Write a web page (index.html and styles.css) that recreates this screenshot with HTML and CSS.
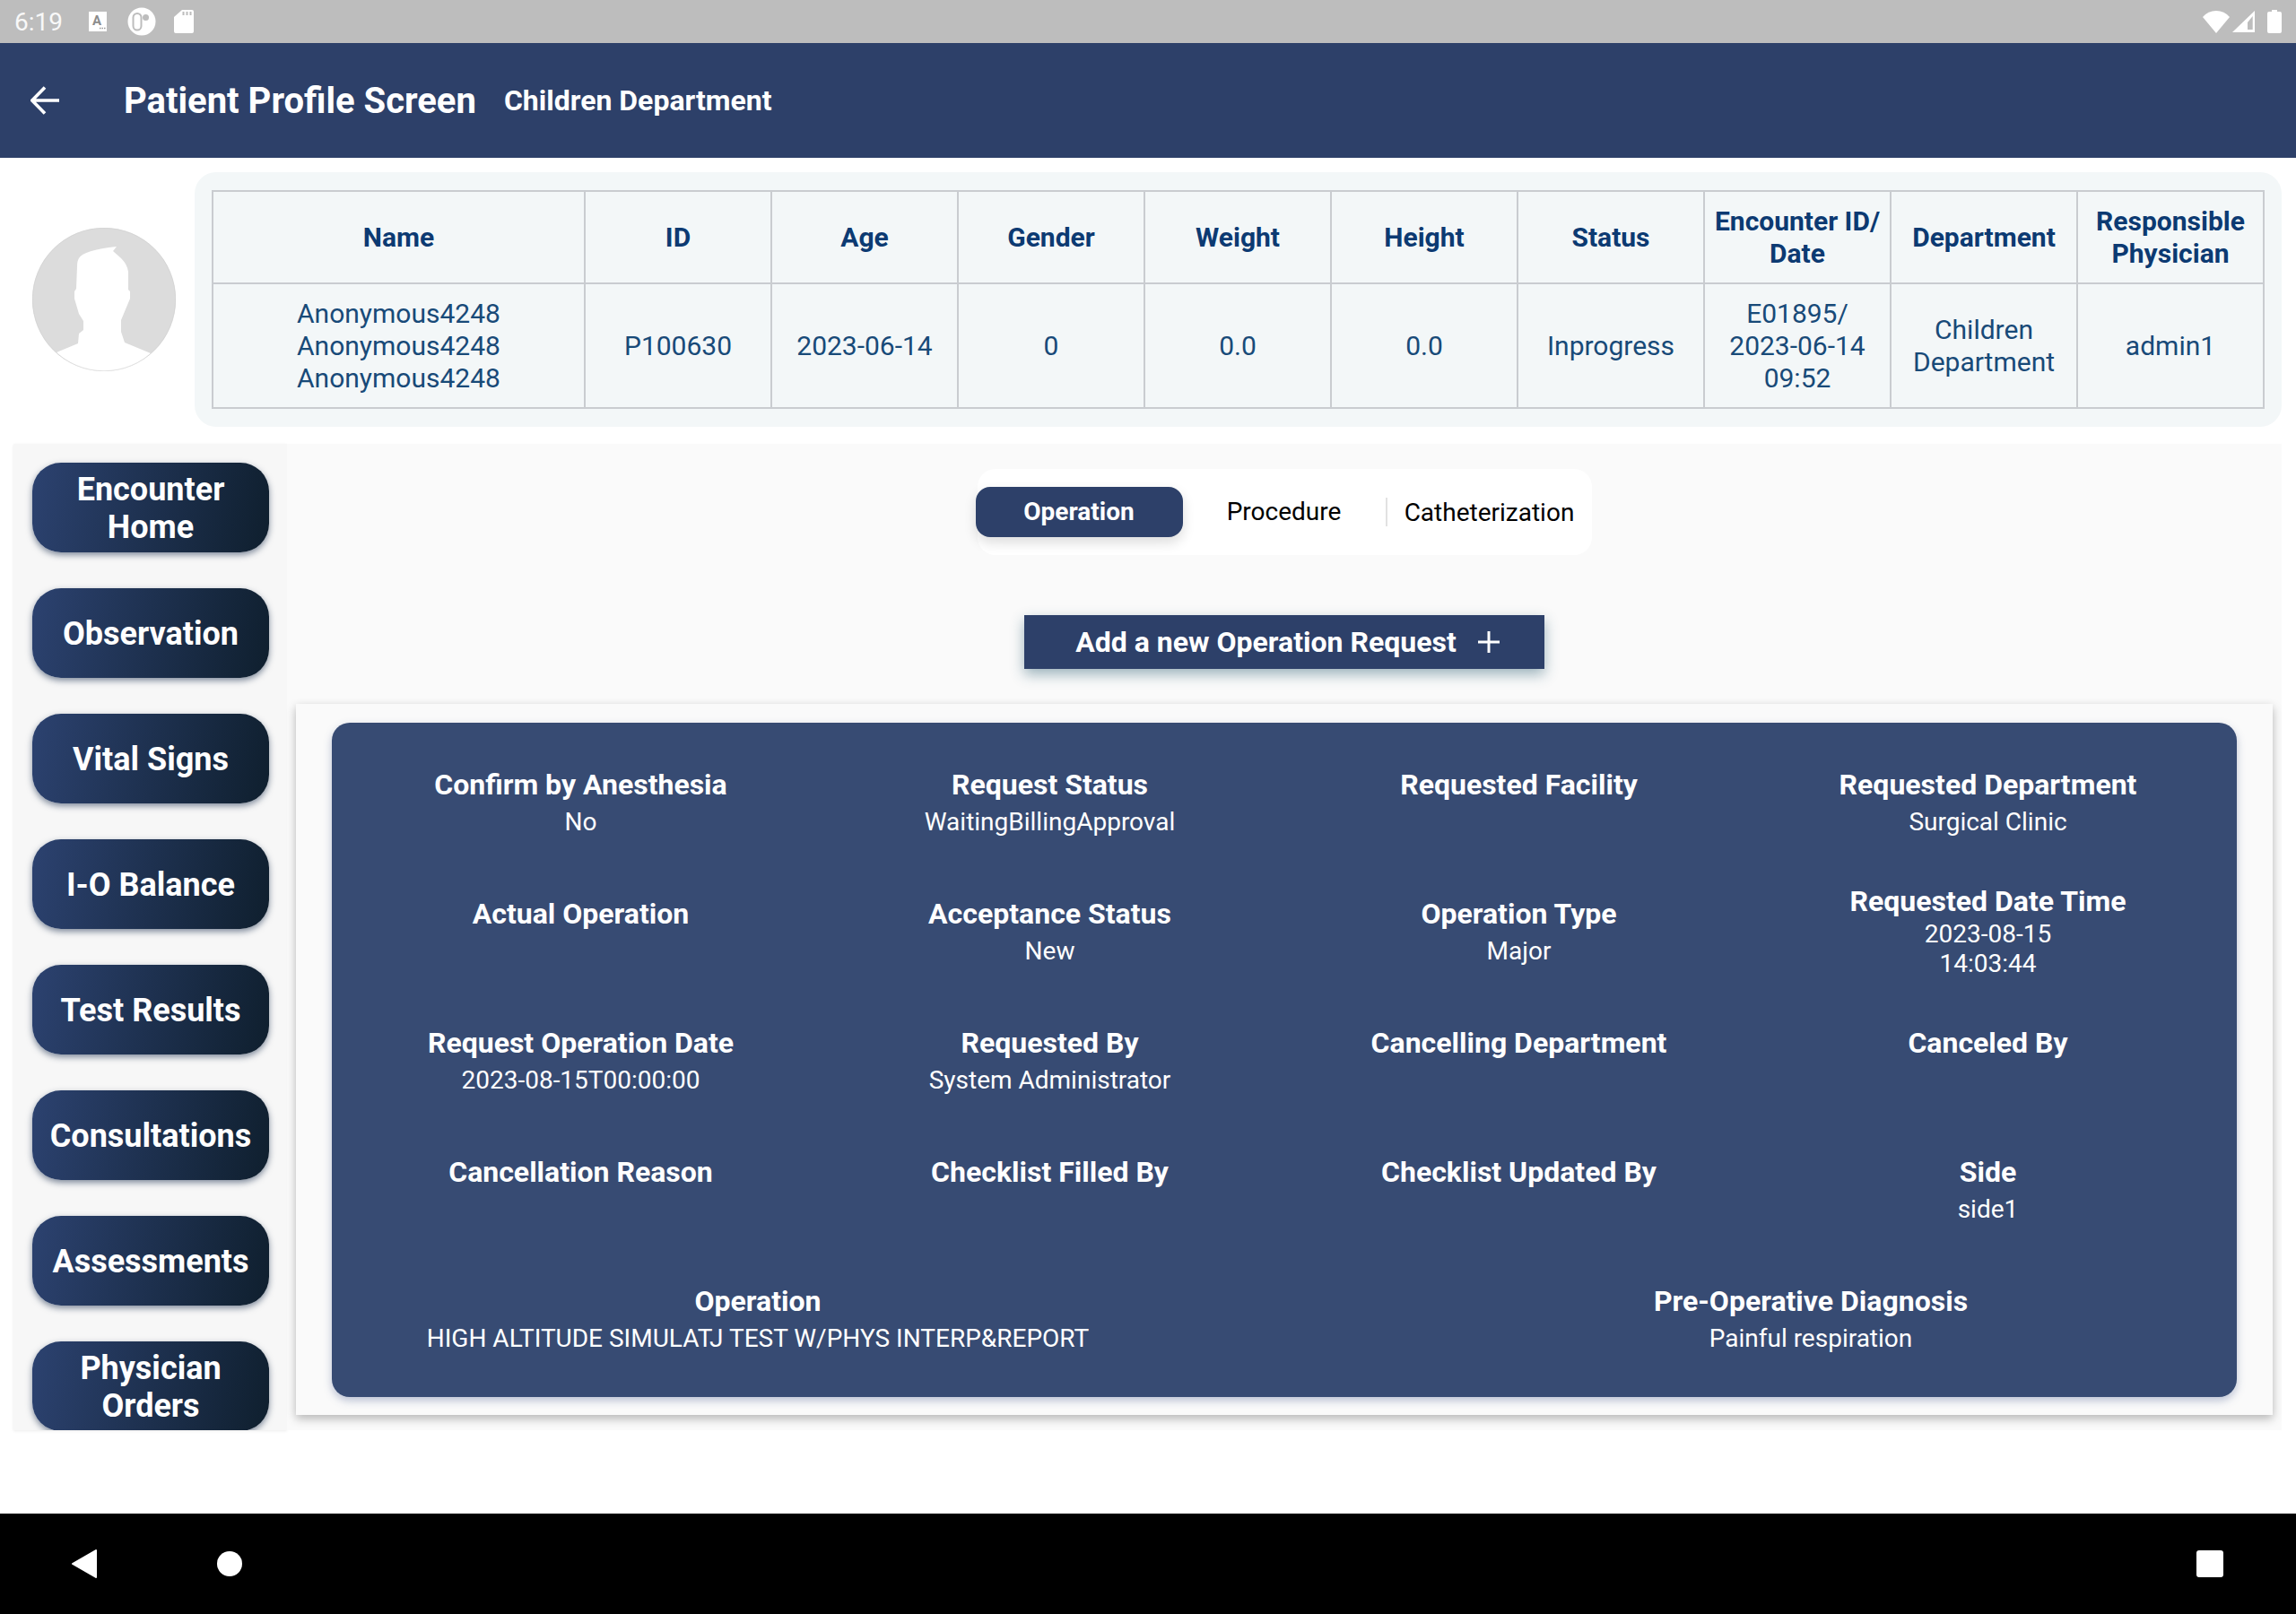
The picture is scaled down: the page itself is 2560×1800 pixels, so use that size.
FILE: index.html
```html
<!DOCTYPE html>
<html lang="en">
<head>
    <meta charset="UTF-8">
    <title>Patient Profile Screen</title>
    <link rel="stylesheet" href="styles.css">
</head>
<body>
    <div class="status-bar">
        <span class="clock">6:19</span>
        <svg class="note-icon" width="20" height="22" viewBox="0 0 20 22"><rect width="20" height="22" fill="#fff"/><text x="9" y="15" class="note-letter">A</text><path d="M12 18.500h7" stroke="#9a9a9a" stroke-width="1.500" stroke-dasharray="1.500 1"/></svg>
        <svg class="circle-icon" width="32" height="32" viewBox="0 0 32 32"><circle cx="16" cy="16" r="15.5" fill="#fff"/><rect x="6.500" y="7" width="9" height="18.500" rx="4.500" fill="#fff" stroke="#bdbdbd" stroke-width="2"/><circle cx="20.500" cy="11.500" r="3.500" fill="#bdbdbd"/></svg>
        <svg class="sd-icon" width="22" height="26" viewBox="0 0 22 26"><path d="M9 0h11a2 2 0 0 1 2 2v22a2 2 0 0 1-2 2H2a2 2 0 0 1-2-2V8z" fill="#fff"/><path d="M10.500 2v4M14.500 2v4M18.500 2v4" stroke="#bdbdbd" stroke-width="2"/></svg>
        <span class="status-right">
            <svg width="30" height="25" viewBox="0 0 30 25"><path d="M15 25 0 7Q6 0 15 0t15 7z" fill="#fff"/></svg>
            <svg width="25" height="24" viewBox="0 0 25 24"><path d="M25 0v24H0z" fill="#fff"/><path d="M22.700 6 17 13v8h5.700z" fill="#bdbdbd"/></svg>
            <svg class="battery" width="16" height="26" viewBox="0 0 16 26"><path d="M5 0h6v2h3a2 2 0 0 1 2 2v20a2 2 0 0 1-2 2H2a2 2 0 0 1-2-2V4a2 2 0 0 1 2-2h3z" fill="#fff"/></svg>
        </span>
    </div>

    <header class="app-bar">
        <svg class="back" width="32" height="32" viewBox="0 0 32 32"><path d="M32 16H3M16 1.500 1.800 16 16 30.500" fill="none" stroke="#fff" stroke-width="3.600"/></svg>
        <h1>Patient Profile Screen</h1>
        <h2>Children Department</h2>
    </header>

    <section class="patient-row">
        <svg class="avatar" width="160" height="160" viewBox="0 0 160 160">
            <circle cx="80" cy="80" r="80" fill="#dcdcdc"/>
            <path d="M94 21 90 26 99 34Q106 41 107 49V69L109 71V79L99 103V116L103 128 132 140Q110 160 80 160 50 160 27 139L51 129 52 118 57 114V104L52 96 47 79V71L49 68 50 43Q50 37 52 34 57 25 94 21Z" fill="#fff"/>
            <circle cx="80" cy="80" r="79.700" fill="none" stroke="#cfcfcf" stroke-width=".6"/>
        </svg>
        <div class="patient-panel">
            <table class="patient-table">
                <colgroup>
                    <col class="col-name"><col><col><col><col><col><col><col><col><col>
                </colgroup>
                <thead>
                    <tr>
                        <th>Name</th><th>ID</th><th>Age</th><th>Gender</th><th>Weight</th><th>Height</th><th>Status</th>
                        <th>Encounter ID/<br>Date</th><th>Department</th><th>Responsible Physician</th>
                    </tr>
                </thead>
                <tbody>
                    <tr>
                        <td>Anonymous4248<br>Anonymous4248<br>Anonymous4248</td>
                        <td>P100630</td><td>2023-06-14</td><td>0</td><td>0.0</td><td>0.0</td><td>Inprogress</td>
                        <td>E01895/<br>2023-06-14<br>09:52</td><td>Children Department</td><td>admin1</td>
                    </tr>
                </tbody>
            </table>
        </div>
    </section>

    <div class="content-row">
        <nav class="side-menu">
            <a class="side-btn">Encounter<br>Home</a>
            <a class="side-btn">Observation</a>
            <a class="side-btn">Vital Signs</a>
            <a class="side-btn">I-O Balance</a>
            <a class="side-btn">Test Results</a>
            <a class="side-btn">Consultations</a>
            <a class="side-btn">Assessments</a>
            <a class="side-btn">Physician<br>Orders</a>
        </nav>
        <main class="main-area">
            <div class="tabs">
                <span class="tab tab-active">Operation</span>
                <span class="tab tab-procedure">Procedure</span>
                <span class="tab tab-cath">Catheterization</span>
            </div>
            <button class="add-btn">Add a new Operation Request
                <svg width="24" height="24" viewBox="0 0 24 24"><path d="M12 0v24M0 12h24" stroke="#fff" stroke-width="3"/></svg>
            </button>
            <div class="request-card">
                <div class="request-panel">
                    <div class="info-grid">
                        <div class="info"><b>Confirm by Anesthesia</b><span>No</span></div>
                        <div class="info"><b>Request Status</b><span>WaitingBillingApproval</span></div>
                        <div class="info"><b>Requested Facility</b><span></span></div>
                        <div class="info"><b>Requested Department</b><span>Surgical Clinic</span></div>

                        <div class="info"><b>Actual Operation</b><span></span></div>
                        <div class="info"><b>Acceptance Status</b><span>New</span></div>
                        <div class="info"><b>Operation Type</b><span>Major</span></div>
                        <div class="info info-tall"><b>Requested Date Time</b><span>2023-08-15<br>14:03:44</span></div>

                        <div class="info"><b>Request Operation Date</b><span>2023-08-15T00:00:00</span></div>
                        <div class="info"><b>Requested By</b><span>System Administrator</span></div>
                        <div class="info"><b>Cancelling Department</b><span></span></div>
                        <div class="info"><b>Canceled By</b><span></span></div>

                        <div class="info"><b>Cancellation Reason</b><span></span></div>
                        <div class="info"><b>Checklist Filled By</b><span></span></div>
                        <div class="info"><b>Checklist Updated By</b><span></span></div>
                        <div class="info"><b>Side</b><span>side1</span></div>
                    </div>
                    <div class="info-wide">
                        <div class="info"><b>Operation</b><span>HIGH ALTITUDE SIMULATJ TEST W/PHYS INTERP&amp;REPORT</span></div>
                        <div class="info"><b>Pre-Operative Diagnosis</b><span>Painful respiration</span></div>
                    </div>
                </div>
            </div>
        </main>
    </div>

    <div class="nav-bar">
        <svg width="28" height="32" viewBox="0 0 28 32"><path d="M27 1 1 16l26 15z" fill="#fff" stroke="#fff" stroke-width="2" stroke-linejoin="round"/></svg>
        <span class="nav-home"></span>
        <span class="nav-recent"></span>
    </div>
</body>
</html>
```

FILE: styles.css
```css
* { box-sizing: border-box; }
html, body { margin: 0; height: 1800px; overflow: hidden; }
body { font-family: Roboto, "Liberation Sans", sans-serif; background: #fff; display: flex; flex-direction: column; }

.status-bar { height: 48px; background: #bdbdbd; display: flex; align-items: center; padding: 0 16px; flex: none; }
.clock { color: #f8f8f8; font-size: 28px; width: 83px; }
.note-icon { margin-right: 23px; }
.note-letter { font-size: 15px; font-weight: 700; fill: #8c8c8c; text-anchor: middle; }
.circle-icon { margin-right: 20px; }
.status-right { margin-left: auto; display: flex; align-items: center; gap: 3px; }
.battery { margin-left: 11px; }

.app-bar { height: 128px; background: #2d4069; color: #fff; display: flex; align-items: center; padding-left: 34px; flex: none; }
.back { margin-right: 73px; }
.app-bar h1 { font-size: 40px; font-weight: 700; margin: 1px 31px 0 -1px; }
.app-bar h2 { font-size: 32px; font-weight: 700; margin: 0; }

.patient-row { display: flex; align-items: center; padding: 16px 16px 0 36px; flex: none; }
.avatar { margin-right: 21px; flex: none; }
.patient-panel { width: 2328px; height: 284px; background: #f3f7f8; border-radius: 24px; padding: 20px 19px; }
.patient-table { width: 2289px; height: 244px; border-collapse: collapse; table-layout: fixed; text-align: center; }
.col-name { width: 415px; }
.patient-table th, .patient-table td { border: 2px solid #c9ccd0; padding: 0 8px; font-size: 30px; line-height: 36px; }
.patient-table th { color: #0c3a72; font-weight: 700; height: 103px; }
.patient-table td { color: #184a78; font-weight: 400; }

.content-row { display: flex; height: 1100px; margin-top: 19px; padding-left: 15px; flex: none; }

.side-menu { width: 305px; height: 1100px; background: #f7f7f7; box-shadow: 0 1px 3px rgba(0,0,0,.08); padding: 21px 20px 0 21px; overflow: hidden; display: flex; flex-direction: column; gap: 40px; flex: none; }
.side-btn { height: 100px; flex: none; padding-top: 2px; border-radius: 32px; color: #fff; font-size: 36px; line-height: 42px; font-weight: 700; text-align: center; display: flex; align-items: center; justify-content: center; background: linear-gradient(100deg, #2c4270, #0f1f2e); box-shadow: 0 3px 7px rgba(30,50,80,.55); }

.main-area { width: 2224px; height: 1100px; background: #fafafa; display: flex; flex-direction: column; align-items: center; padding-top: 28px; }

.tabs { width: 685px; height: 96px; background: #fff; border-radius: 20px; display: flex; align-items: center; flex: none; }
.tab { font-size: 28px; color: #000; text-align: center; }
.tab-active { width: 231px; height: 56px; margin-left: -2px; background: #2d4069; color: #fff; font-weight: 700; border-radius: 16px; line-height: 56px; box-shadow: 0 6px 14px rgba(0,0,0,.14); }
.tab-procedure { width: 228px; height: 32px; line-height: 32px; border-right: 2px solid #e2e2e2; }
.tab-cath { width: 228px; }

.add-btn { width: 580px; height: 60px; margin-top: 67px; border: 0; padding: 0 0 0 7px; background: #2d4069; color: #fff; font-family: inherit; font-size: 32px; font-weight: 700; display: flex; align-items: center; justify-content: center; gap: 24px; box-shadow: 0 6px 14px rgba(40,90,110,.45); flex: none; }

.request-card { width: 2204px; height: 793px; margin-top: 39px; background: #fafafa; box-shadow: 0 4px 10px rgba(0,0,0,.28); padding: 21px 40px 20px 40px; flex: none; }
.request-panel { height: 752px; background: #374b73; border-radius: 20px; box-shadow: 0 4px 10px rgba(70,90,140,.35); color: #fff; padding: 0 16px; }

.info-grid { display: grid; grid-template-columns: repeat(4, 523px); grid-auto-rows: 144px; padding-top: 44px; }
.info { display: flex; flex-direction: column; align-items: center; text-align: center; }
.info b { font-size: 32px; font-weight: 700; line-height: 50px; }
.info span { font-size: 28px; line-height: 33px; min-height: 33px; }
.info-tall { margin-top: -8px; }
.info-tall b { line-height: 39px; }

.info-wide { display: flex; justify-content: space-between; }
.info-wide .info { width: 918px; }

.nav-bar { height: 112px; margin-top: auto; background: #000; flex: none; display: flex; align-items: center; padding-left: 80px; }
.nav-home { width: 28px; height: 28px; border-radius: 50%; background: #fff; margin-left: 134px; }
.nav-recent { width: 30px; height: 30px; border-radius: 3px; background: #fff; margin-left: auto; margin-right: 81px; }
```
